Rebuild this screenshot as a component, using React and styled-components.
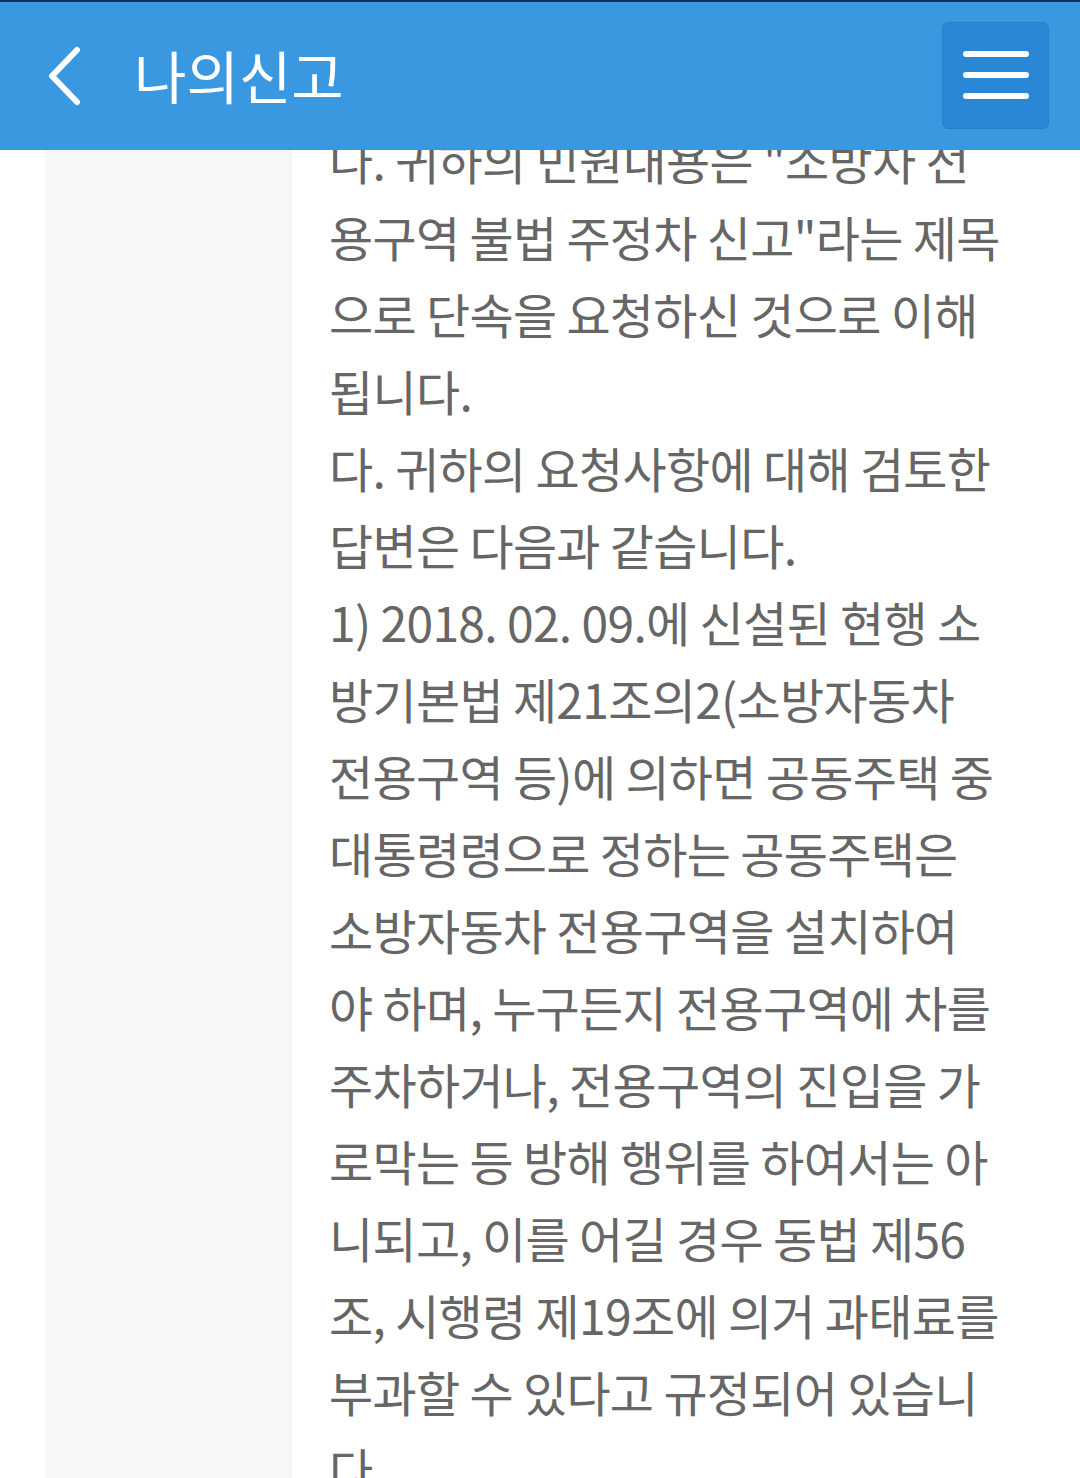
import React from 'react'
import styled, {createGlobalStyle} from 'styled-components'

const GlobalStyle = createGlobalStyle`
    html, body {
        margin: 0;
        padding: 0;
        background: #ffffff;
        overflow: hidden;
    }
    body {
        font-family: "Noto Sans CJK KR", "Noto Sans", sans-serif;
    }
`;

const Header = styled.header`
    position: fixed;
    top: 0;
    left: 0;
    right: 0;
    z-index: 10;
    height: 148px;
    border-top: 2px solid #14305c;
    background: #3a98e1;
    display: flex;
    align-items: center;
    padding: 0 31px 0 44px;
`;
const BackButton = styled.button`
    border: 0;
    background: none;
    padding: 0;
    width: 48px;
    height: 64px;
    display: flex;
    align-items: center;
    justify-content: flex-start;
    cursor: pointer;
`;
const Title = styled.h1`
    margin: 0 0 0 42px;
    flex: 1;
    color: #ffffff;
    font-size: 57px;
    font-weight: 400;
    letter-spacing: 0;
    line-height: 1;
    padding-bottom: 4px;
`;
const MenuButton = styled.button`
    width: 107px;
    height: 107px;
    margin-top: -2px;
    border-radius: 6px;
    border: 1px solid #2a7fc8;
    background: #2a87d6;
    display: flex;
    flex-direction: column;
    align-items: center;
    justify-content: center;
    gap: 15px;
    padding: 0;
    cursor: pointer;
`;
const MenuLine = styled.span`
    display: block;
    width: 66px;
    height: 6px;
    border-radius: 3px;
    background: #ffffff;
`;

const Page = styled.main`
    display: flex;
    padding-left: 45px;
    min-height: 1478px;
`;
const Side = styled.aside`
    width: 247px;
    flex-shrink: 0;
    background: #f7f7f7;
`;
const Content = styled.section`
    flex: 1;
    padding: 121px 0 0 37px;
`;
const Line = styled.div`
    color: #666666;
    font-size: 48px;
    line-height: 77px;
    letter-spacing: -0.7px;
    white-space: nowrap;
`;

const lines = [
    '나. 귀하의 민원내용은 "소방차 전',
    '용구역 불법 주정차 신고"라는 제목',
    '으로 단속을 요청하신 것으로 이해',
    '됩니다.',
    '다. 귀하의 요청사항에 대해 검토한',
    '답변은 다음과 같습니다.',
    '1) 2018. 02. 09.에 신설된 현행 소',
    '방기본법 제21조의2(소방자동차',
    '전용구역 등)에 의하면 공동주택 중',
    '대통령령으로 정하는 공동주택은',
    '소방자동차 전용구역을 설치하여',
    '야 하며, 누구든지 전용구역에 차를',
    '주차하거나, 전용구역의 진입을 가',
    '로막는 등 방해 행위를 하여서는 아',
    '니되고, 이를 어길 경우 동법 제56',
    '조, 시행령 제19조에 의거 과태료를',
    '부과할 수 있다고 규정되어 있습니',
    '다.',
]

export default function App() {
    return (
        <>
            <GlobalStyle/>
            <Header>
                <BackButton aria-label="back">
                    <svg width="40" height="60" viewBox="0 0 40 60">
                        <path d="M33 4 L8 30 L33 56" fill="none" stroke="#ffffff" strokeWidth="6" strokeLinecap="round" strokeLinejoin="round"/>
                    </svg>
                </BackButton>
                <Title>나의신고</Title>
                <MenuButton aria-label="menu">
                    <MenuLine/>
                    <MenuLine/>
                    <MenuLine/>
                </MenuButton>
            </Header>
            <Page>
                <Side/>
                <Content>
                    {lines.map((t, i) => <Line key={i}>{t}</Line>)}
                </Content>
            </Page>
        </>
    )
}
